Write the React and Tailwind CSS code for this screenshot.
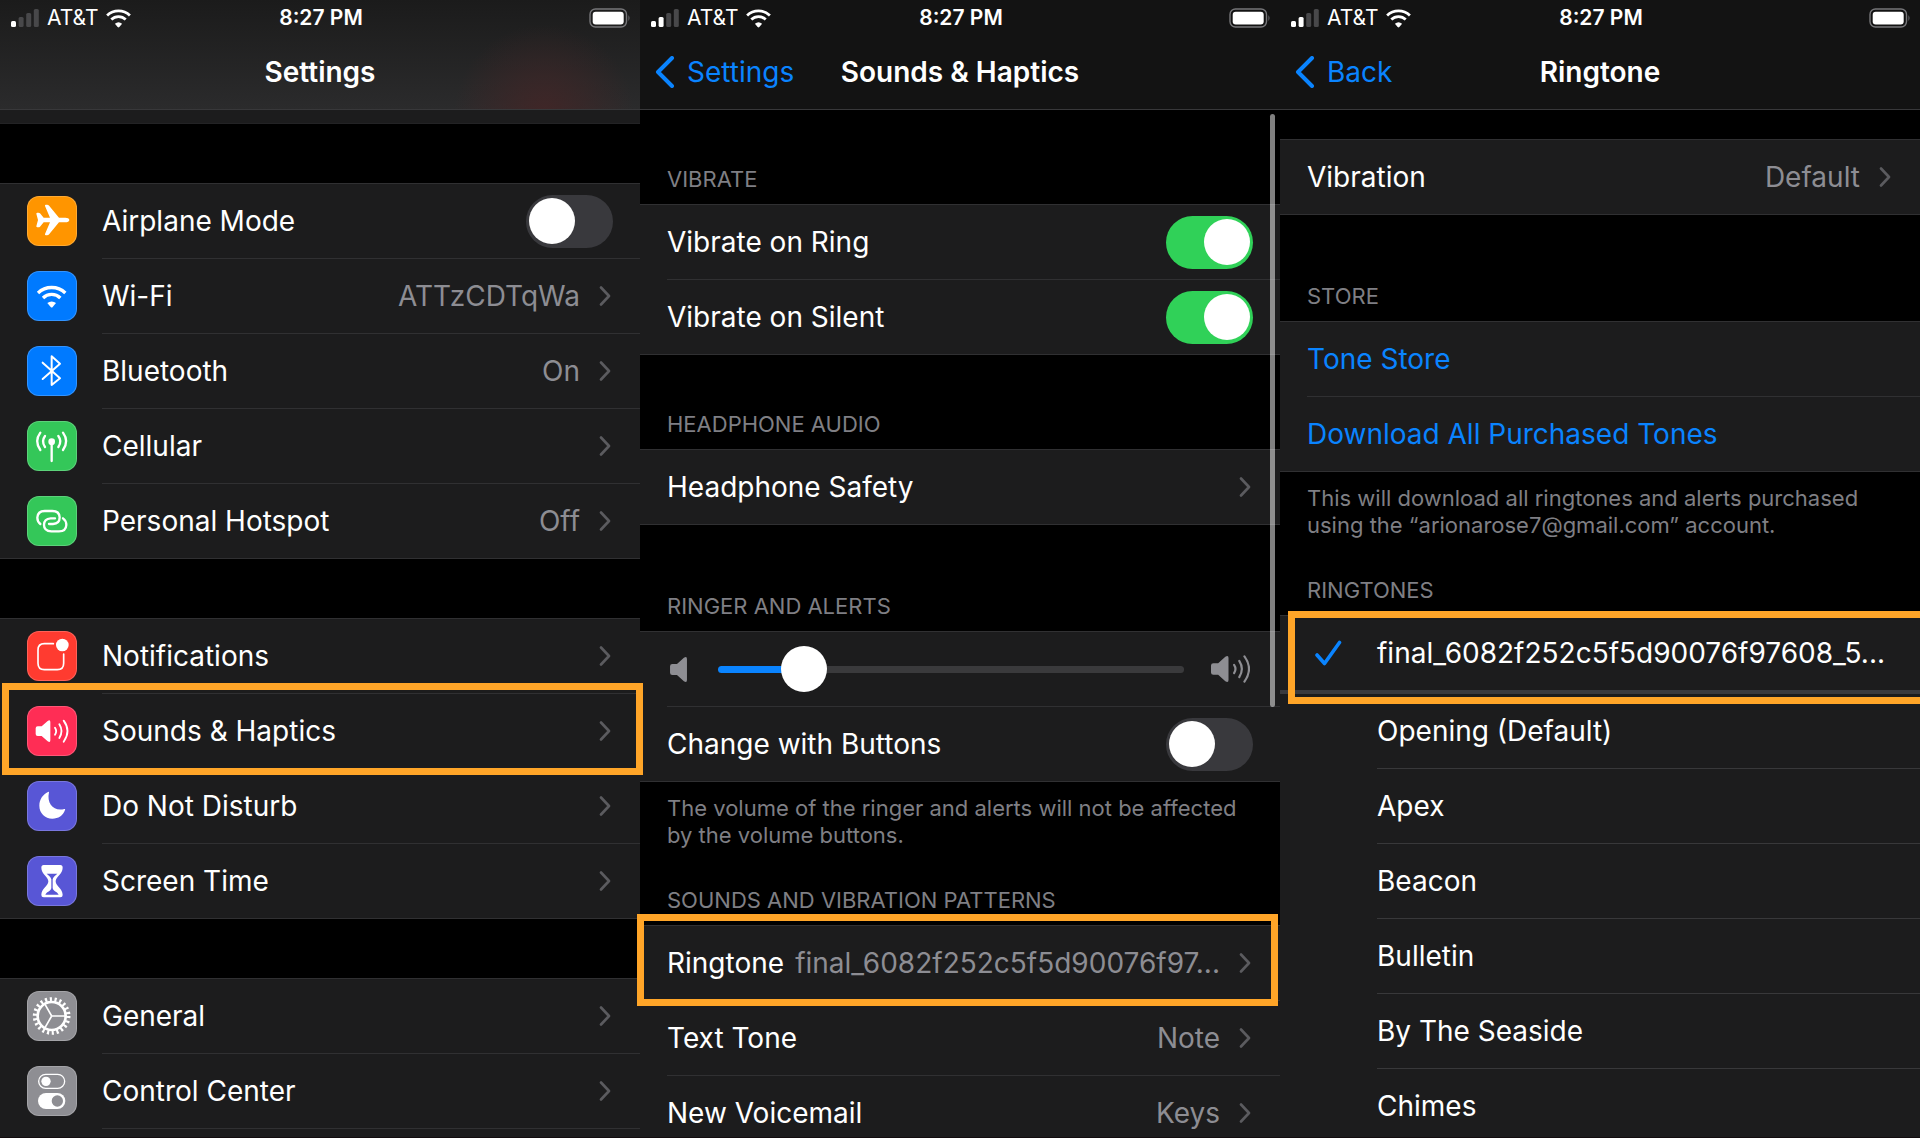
import { useState } from "react";
import clsx from "clsx";

/* ---------- Glyphs ---------- */

function WifiGlyph() {
  return (
    <>
      <g fill="none" stroke="currentColor" strokeWidth="10">
        <path d="M33 66 A59 59 0 0 1 115 66" />
        <path d="M48 81 A37 37 0 0 1 100 81" />
      </g>
      <path d="M61 96 A20 20 0 0 1 87 96 L77 108 Q74 111 71 108 Z" fill="currentColor" />
    </>
  );
}

function SpeakerGlyph() {
  return (
    <path
      d="M26 67 q0 -6 6 -6 H44 L62 45 q8 -5 8 3 V103 q0 8 -8 3 L44 90 H32 q-6 0 -6 -6 z"
      fill="currentColor"
    />
  );
}

function SoundGlyph() {
  return (
    <>
      <SpeakerGlyph />
      <g fill="none" stroke="currentColor" strokeWidth="5.5" strokeLinecap="round">
        <path d="M84 65 Q91 75 84 86" />
        <path d="M97 55 Q110 75 97 96" />
        <path d="M110 44 Q133 75 110 107" />
      </g>
    </>
  );
}

const glyphs = {
  airplane: (
    <path
      d="M127 72 c0 5 -6 7 -12 7 H96 L67 114 q-3 4 -7 4 h-3 q-4 0 -3 -4 L69 79 H50 L39 92 q-2 2 -5 2 H31 q-3 0 -3 -3 L33 72 L28 53 q0 -3 3 -3 h3 q3 0 5 2 L50 65 H69 L54 30 q-1 -4 3 -4 h3 q4 0 7 4 L96 65 H115 c6 0 12 2 12 7 z"
      fill="currentColor"
    />
  ),
  wifi: <WifiGlyph />,
  bluetooth: (
    <path
      d="M47 50 L99 97 L74 117 V31 L99 53 L47 99"
      fill="none"
      stroke="currentColor"
      strokeWidth="6"
      strokeLinejoin="round"
      strokeLinecap="round"
    />
  ),
  cellular: (
    <>
      <g fill="none" stroke="currentColor" strokeWidth="7" strokeLinecap="round">
        <path d="M74 62 V120" />
        <path d="M40 35 Q21 61 40 87" />
        <path d="M54 45 Q42 61 54 78" />
        <path d="M108 35 Q127 61 108 87" />
        <path d="M94 45 Q106 61 94 78" />
      </g>
      <circle cx="74" cy="62" r="10" fill="currentColor" />
    </>
  ),
  hotspot: (
    <g fill="none" stroke="currentColor" strokeWidth="7" strokeLinecap="round">
      <path d="M40 84 Q31 77 31 65 Q32 45 53 45 H76 Q97 45 98 64 Q98 83 78 84 H66" />
      <path d="M108 67 Q118 74 118 87 Q117 106 96 106 H73 Q51 105 51 87 Q51 68 71 67 H84" />
    </g>
  ),
  notifications: (
    <>
      <path
        d="M79 38 H52 Q33 38 33 57 V97 Q33 116 52 116 H91 Q110 116 110 97 V69"
        fill="none"
        stroke="currentColor"
        strokeWidth="5"
        strokeLinecap="round"
      />
      <circle cx="106" cy="42" r="19" fill="currentColor" />
    </>
  ),
  sound: <SoundGlyph />,
  moon: (
    <path
      d="M66 34 C58 70 82 92 112 84 Q116 83 114 87 C108 104 94 113 76 113 C54 113 37 96 37 74 C37 55 48 40 63 33 Q67 31 66 34 z"
      fill="currentColor"
    />
  ),
  hourglass: (
    <>
      <path
        d="M50 27 H100 q7 0 7 8 C107 54 86 62 86 76 C86 90 107 98 107 117 q0 7 -7 7 H50 q-7 0 -7 -7 C43 98 64 90 64 76 C64 62 43 54 43 35 q0 -8 7 -8 z"
        fill="currentColor"
      />
      <path
        d="M59 53 H91 C86 58 78 62 77 70 V96 C78 106 91 107 95 116 H55 C59 107 72 106 73 96 V70 C72 62 64 58 59 53 z"
        fill="#5856d6"
      />
    </>
  ),
  gear: (
    <g fill="none" stroke="currentColor">
      <circle cx="74" cy="75" r="42" strokeWidth="8" />
      <circle cx="74" cy="75" r="50" strokeWidth="13" strokeDasharray="6.4 7.88" />
      <path d="M74 75 H114 M74 75 L54 40 M74 75 L54 110" strokeWidth="5" />
    </g>
  ),
  controls: (
    <>
      <rect x="35" y="25" width="78" height="42" rx="21" fill="none" stroke="currentColor" strokeWidth="4" />
      <circle cx="57" cy="46" r="14" fill="currentColor" />
      <rect x="33" y="81" width="82" height="48" rx="24" fill="currentColor" />
      <circle cx="91" cy="105" r="17" fill="#8e8e93" />
    </>
  ),
};

function Tile({ glyph, color }) {
  return (
    <span
      className={clsx(
        "mb-px h-[50px] w-[50px] shrink-0 overflow-hidden rounded-xl text-white inset-ring inset-ring-white/20",
        color
      )}
    >
      <svg viewBox="0 0 150 150" className="h-full w-full" aria-hidden="true">
        {glyphs[glyph]}
      </svg>
    </span>
  );
}

function Chevron() {
  return (
    <svg viewBox="0 0 12 20" className="mr-0.5 h-5 w-3 shrink-0 text-[#5b5b5f]" aria-hidden="true">
      <path d="M2 1.5 L10 10 L2 18.5" fill="none" stroke="currentColor" strokeWidth="2.6" strokeLinecap="round" strokeLinejoin="round" />
    </svg>
  );
}

/* ---------- Header ---------- */

function StatusBar({ bars }) {
  return (
    <div className="grid h-[35px] grid-cols-3 items-center pr-[9px] pl-[11px] text-[21px]">
      <div className="flex items-center gap-2">
        <svg viewBox="0 0 28 18" className="h-[18px] w-7" aria-hidden="true">
          {[6, 10, 14, 18].map((h, i) => (
            <rect
              key={h}
              x={i * 7.6}
              y={18 - h}
              width="5"
              height={h}
              rx="1.5"
              fill={i < bars ? "#fff" : "#48484a"}
            />
          ))}
        </svg>
        <span>AT&amp;T</span>
        <svg viewBox="29 43 90 68" className="h-[19px] w-[25px]" aria-hidden="true">
          <WifiGlyph />
        </svg>
      </div>
      <span className="text-center font-semibold">8:27 PM</span>
      <svg viewBox="0 0 42 20" className="h-5 w-[42px] justify-self-end" aria-hidden="true">
        <rect x="1" y="1" width="36.5" height="18" rx="5.5" fill="none" stroke="#77777a" strokeWidth="1.4" />
        <rect x="3.7" y="3.7" width="31" height="12.8" rx="3" fill="#fff" />
        <path d="M39.5 7 Q41.4 10 39.5 13 z" fill="#77777a" />
      </svg>
    </div>
  );
}

function Header({ title, back, bars, className }) {
  return (
    <header className={clsx("border-b border-[#38383a]", className)}>
      <StatusBar bars={bars} />
      <div className="grid h-[74px] grid-cols-[1fr_auto_1fr] items-center px-[15px]">
        {back ? (
          <a href="#" className="flex items-center gap-3 text-[#0a84ff]">
            <svg viewBox="0 0 20 32" className="h-8 w-5" aria-hidden="true">
              <path d="M17 2 L3 16 L17 30" fill="none" stroke="currentColor" strokeWidth="4" strokeLinecap="round" strokeLinejoin="round" />
            </svg>
            {back}
          </a>
        ) : (
          <span />
        )}
        <h1 className="font-semibold">{title}</h1>
      </div>
    </header>
  );
}

/* ---------- List pieces ---------- */

function Group({ children }) {
  return <div className="border-t border-[#303032] bg-[#1c1c1d]">{children}</div>;
}

function GroupTitle({ children, className }) {
  return (
    <h2 className={clsx("px-[27px] pb-[11px] text-[22px] leading-[27px] text-[#7f7f84]", className)}>
      {children}
    </h2>
  );
}

function Note({ children }) {
  return (
    <p className="px-[27px] pt-[13px] text-[22px] leading-[27px] whitespace-nowrap text-[#7f7f84]">
      {children}
    </p>
  );
}

function Highlight({ className }) {
  return <span className={clsx("pointer-events-none absolute z-10 border-[7px] border-[#ffa528]", className)} />;
}

function Row({ as: Tag = "a", icon, last, highlight, children, ...rest }) {
  return (
    <Tag
      {...rest}
      className={clsx("relative flex h-[75px] items-center gap-[25px] pl-[27px]", last && "border-b border-[#303032]")}
    >
      {icon && <Tile {...icon} />}
      <span
        className={clsx(
          "flex h-full min-w-0 flex-1 items-center justify-between pr-[27px] whitespace-nowrap",
          !last && "border-b border-[#303032]"
        )}
      >
        {children}
      </span>
      {highlight && <Highlight className={highlight} />}
    </Tag>
  );
}

function LinkRow({ label, value, ...rest }) {
  return (
    <Row href="#" {...rest}>
      <span>{label}</span>
      <span className="flex items-center gap-[19px]">
        {value && <span className="text-[#8d8d93]">{value}</span>}
        <Chevron />
      </span>
    </Row>
  );
}

function ToggleRow({ label, initial = false, ...rest }) {
  const [on, setOn] = useState(initial);
  return (
    <Row as="label" {...rest}>
      {label}
      <input
        type="checkbox"
        checked={on}
        onChange={() => setOn(!on)}
        className="flex h-[53px] w-[87px] appearance-none items-center rounded-full bg-[#39393d] px-[3px] before:h-[46px] before:w-[46px] before:rounded-full before:bg-white checked:justify-end checked:bg-[#30d158]"
      />
    </Row>
  );
}

function VolumeRow() {
  const [volume, setVolume] = useState(15);
  return (
    <Row as="div">
      <svg viewBox="26 43 44 65" className="ml-[3px] h-[25px] w-[17px] text-[#8e8e93]" aria-hidden="true">
        <SpeakerGlyph />
      </svg>
      <input
        type="range"
        aria-label="Ringer volume"
        value={volume}
        onChange={(e) => setVolume(Number(e.target.value))}
        style={{
          backgroundImage: `linear-gradient(to right, #0a84ff ${volume + 4}%, #3a3a3c ${volume + 4}%)`,
        }}
        className="mr-[27px] ml-[31px] h-[7px] min-w-0 flex-1 appearance-none rounded-full [&::-webkit-slider-thumb]:h-[46px] [&::-webkit-slider-thumb]:w-[46px] [&::-webkit-slider-thumb]:appearance-none [&::-webkit-slider-thumb]:rounded-full [&::-webkit-slider-thumb]:bg-white"
      />
      <svg viewBox="26 41 98 69" className="mr-[3px] h-7 w-[39px] text-[#8e8e93]" aria-hidden="true">
        <SoundGlyph />
      </svg>
    </Row>
  );
}

function ToneOption({ name, checked, onSelect, highlight }) {
  return (
    <label
      className={clsx(
        "relative flex items-center pl-[34px]",
        highlight ? "h-[78px] border-b-4 border-[#3a3a3e]" : "h-[75px]"
      )}
    >
      <input type="radio" name="ringtone" checked={checked} onChange={onSelect} className="sr-only" />
      <svg viewBox="0 0 28 26" className="h-[26px] w-7 shrink-0 text-[#0a84ff]" aria-hidden="true">
        {checked && (
          <path d="M3 15 L10.5 23.5 L25.5 2.5" fill="none" stroke="currentColor" strokeWidth="3.6" strokeLinecap="round" strokeLinejoin="round" />
        )}
      </svg>
      <span
        className={clsx(
          "ml-[35px] flex h-full flex-1 items-center whitespace-nowrap",
          !highlight && "border-b border-[#38383a]"
        )}
      >
        {name}
      </span>
      {highlight && <Highlight className={highlight} />}
    </label>
  );
}

/* ---------- Screens ---------- */

const tones = [
  "final_6082f252c5f5d90076f97608_5...",
  "Opening (Default)",
  "Apex",
  "Beacon",
  "Bulletin",
  "By The Seaside",
  "Chimes",
];

function SettingsScreen() {
  return (
    <section className="min-w-0 flex-1">
      <Header
        title="Settings"
        bars={1}
        className="bg-[radial-gradient(ellipse_90px_90px_at_85%_105%,#402627,transparent),linear-gradient(to_bottom,#1b1b1b,#2b2b2c)]"
      />
      <div className="mb-[59px] h-[14px] border-b border-[#232325] bg-[#1c1c1d]" />
      <div className="flex flex-col gap-[59px]">
        <Group>
          <ToggleRow label="Airplane Mode" icon={{ glyph: "airplane", color: "bg-[#ff9500]" }} />
          <LinkRow label="Wi-Fi" value="ATTzCDTqWa" icon={{ glyph: "wifi", color: "bg-[#007aff]" }} />
          <LinkRow label="Bluetooth" value="On" icon={{ glyph: "bluetooth", color: "bg-[#007aff]" }} />
          <LinkRow label="Cellular" icon={{ glyph: "cellular", color: "bg-[#34c759]" }} />
          <LinkRow label="Personal Hotspot" value="Off" last icon={{ glyph: "hotspot", color: "bg-[#34c759]" }} />
        </Group>
        <Group>
          <LinkRow label="Notifications" icon={{ glyph: "notifications", color: "bg-[#ff3b30]" }} />
          <LinkRow
            label="Sounds & Haptics"
            icon={{ glyph: "sound", color: "bg-[#ff2d55]" }}
            highlight="-top-[11px] -right-[3px] -bottom-1.5 left-0.5"
          />
          <LinkRow label="Do Not Disturb" icon={{ glyph: "moon", color: "bg-[#5856d6]" }} />
          <LinkRow label="Screen Time" last icon={{ glyph: "hourglass", color: "bg-[#5856d6]" }} />
        </Group>
        <Group>
          <LinkRow label="General" icon={{ glyph: "gear", color: "bg-[#8e8e93]" }} />
          <LinkRow label="Control Center" icon={{ glyph: "controls", color: "bg-[#8e8e93]" }} />
          <div className="h-[75px]" />
        </Group>
      </div>
    </section>
  );
}

function SoundsScreen() {
  return (
    <section className="relative min-w-0 flex-1">
      <Header title="Sounds & Haptics" back="Settings" bars={2} className="bg-[#131313]" />
      <GroupTitle className="pt-[56px]">VIBRATE</GroupTitle>
      <Group>
        <ToggleRow label="Vibrate on Ring" initial />
        <ToggleRow label="Vibrate on Silent" initial last />
      </Group>
      <GroupTitle className="pt-[56px]">HEADPHONE AUDIO</GroupTitle>
      <Group>
        <LinkRow label="Headphone Safety" last />
      </Group>
      <GroupTitle className="pt-[68px]">RINGER AND ALERTS</GroupTitle>
      <Group>
        <VolumeRow />
        <ToggleRow label="Change with Buttons" last />
      </Group>
      <Note>
        The volume of the ringer and alerts will not be affected
        <br />
        by the volume buttons.
      </Note>
      <GroupTitle className="pt-[38px]">SOUNDS AND VIBRATION PATTERNS</GroupTitle>
      <Group>
        <LinkRow
          label="Ringtone"
          value="final_6082f252c5f5d90076f97..."
          highlight="-top-3 right-0.5 -bottom-[5px] -left-[3px]"
        />
        <LinkRow label="Text Tone" value="Note" />
        <LinkRow label="New Voicemail" value="Keys" />
      </Group>
      {/* scroll indicator */}
      <span className="absolute top-[114px] right-[5px] h-[593px] w-[5px] rounded-full bg-white/50" />
    </section>
  );
}

function RingtoneScreen() {
  const [selected, setSelected] = useState(tones[0]);
  return (
    <section className="min-w-0 flex-1">
      <Header title="Ringtone" back="Back" bars={2} className="mb-[29px] bg-[#131313]" />
      <Group>
        <LinkRow label="Vibration" value="Default" last />
      </Group>
      <GroupTitle className="pt-[68px]">STORE</GroupTitle>
      <Group>
        <Row href="#">
          <span className="text-[#0a84ff]">Tone Store</span>
        </Row>
        <Row href="#" last>
          <span className="text-[#0a84ff]">Download All Purchased Tones</span>
        </Row>
      </Group>
      <Note>
        This will download all ringtones and alerts purchased
        <br />
        using the “arionarose7@gmail.com” account.
      </Note>
      <GroupTitle className="pt-[38px]">RINGTONES</GroupTitle>
      <Group>
        {tones.map((tone, i) => (
          <ToneOption
            key={tone}
            name={tone}
            checked={tone === selected}
            onSelect={() => setSelected(tone)}
            highlight={i === 0 && "-top-[5px] -right-2 -bottom-[14px] left-2"}
          />
        ))}
      </Group>
    </section>
  );
}

export default function App() {
  return (
    <main className="flex h-screen overflow-hidden border-b border-[#120c0e] bg-black font-[Inter,'Liberation_Sans',sans-serif] text-[28px] leading-9 text-white">
      <SettingsScreen />
      <SoundsScreen />
      <RingtoneScreen />
    </main>
  );
}
